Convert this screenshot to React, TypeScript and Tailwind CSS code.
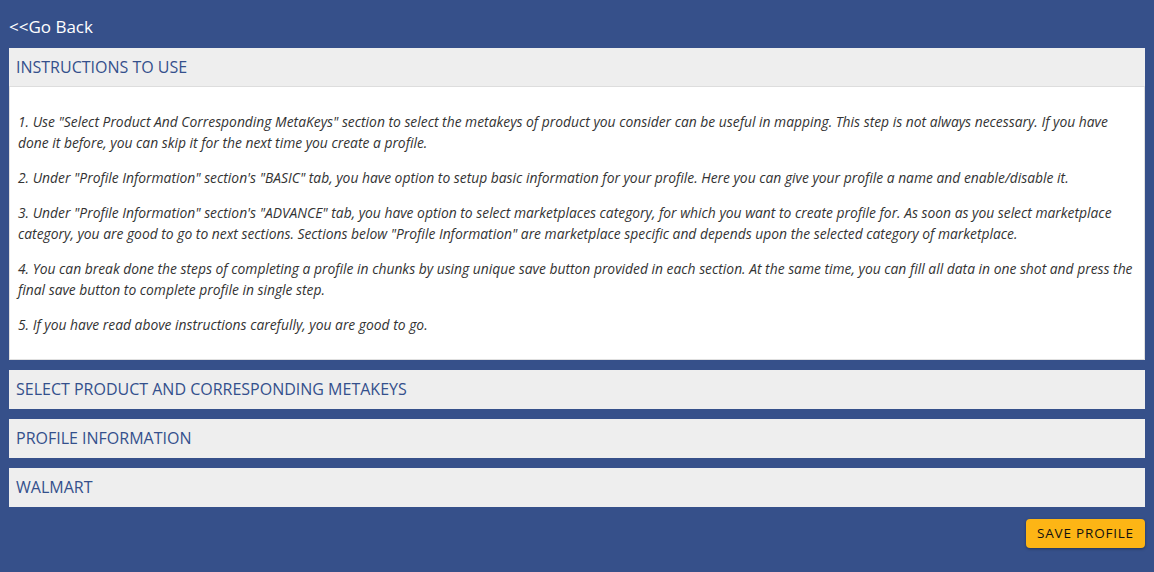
import React from "react";

const Header = ({ title }: { title: string }) => (
  <div className="bg-[#eeeeee] h-[39px] flex items-center px-[7px] pb-[2px] text-[16px] text-[#34508c]">
    {title}
  </div>
);

const Para = ({ lines, last }: { lines: string[]; last?: boolean }) => (
  <p className={last ? "" : "mb-[14px]"}>
    {lines.map((l, i) => (
      <span key={i} className="block whitespace-nowrap">
        {l}
      </span>
    ))}
  </p>
);

export default function App() {
  return (
    <div
      className="w-[1154px] h-[572px] bg-[#36508a] px-[9px] pt-[17px]"
      style={{ fontFamily: '"Open Sans", "DejaVu Sans", sans-serif' }}
    >
      <div className="text-white text-[17px] leading-[20px] h-[31px]">&lt;&lt;Go Back</div>
      <div className="flex flex-col">
        <div className="bg-white">
          <div className="bg-[#eeeeee] h-[39px] flex items-center px-[7px] pb-[1px] text-[16px] text-[#34508c] border-b border-[#dddddd]">
            INSTRUCTIONS TO USE
          </div>
          <div className="border-x border-b border-[#e0e0e0] px-[8px] pt-[24px] pb-[24px] text-[13.85px] leading-[21px] italic text-[#333333]">
            <Para
              lines={[
                '1. Use "Select Product And Corresponding MetaKeys" section to select the metakeys of product you consider can be useful in mapping. This step is not always necessary. If you have',
                "done it before, you can skip it for the next time you create a profile.",
              ]}
            />
            <Para
              lines={[
                '2. Under "Profile Information" section\'s "BASIC" tab, you have option to setup basic information for your profile. Here you can give your profile a name and enable/disable it.',
              ]}
            />
            <Para
              lines={[
                '3. Under "Profile Information" section\'s "ADVANCE" tab, you have option to select marketplaces category, for which you want to create profile for. As soon as you select marketplace',
                'category, you are good to go to next sections. Sections below "Profile Information" are marketplace specific and depends upon the selected category of marketplace.',
              ]}
            />
            <Para
              lines={[
                "4. You can break done the steps of completing a profile in chunks by using unique save button provided in each section. At the same time, you can fill all data in one shot and press the",
                "final save button to complete profile in single step.",
              ]}
            />
            <Para last lines={["5. If you have read above instructions carefully, you are good to go."]} />
          </div>
        </div>
        <div className="mt-[10px]">
          <Header title="SELECT PRODUCT AND CORRESPONDING METAKEYS" />
        </div>
        <div className="mt-[10px]">
          <Header title="PROFILE INFORMATION" />
        </div>
        <div className="mt-[10px]">
          <Header title="WALMART" />
        </div>
        <div className="flex justify-end mt-[12px]">
          <button className="bg-[#fdb515] rounded-[4px] h-[29px] w-[119px] text-[13.5px] font-medium tracking-[0.8px] text-[#111111] shadow-[0_1px_3px_rgba(0,0,0,0.35)]">
            SAVE PROFILE
          </button>
        </div>
      </div>
    </div>
  );
}
